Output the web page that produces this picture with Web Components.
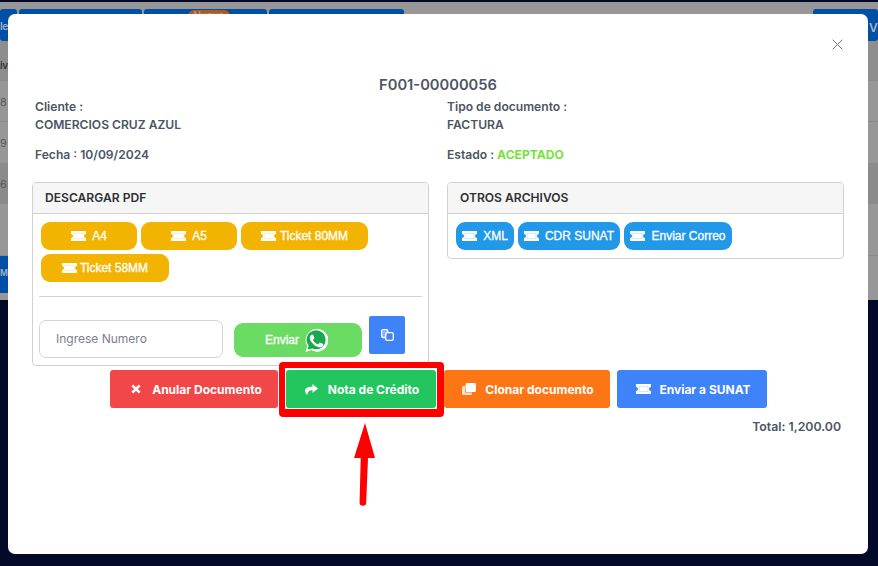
<!DOCTYPE html>
<html>
<head>
<meta charset="utf-8">
<style>
  html,body{margin:0;height:100%;overflow:hidden;background:#030929;}
</style>
</head>
<body>
<app-backdrop></app-backdrop>
<doc-modal></doc-modal>

<script>
const TICKET=`<svg viewBox="0 0 15 10" width="15" height="10" fill="currentColor"><path d="M0 0h15v3a2 2 0 0 0 0 4v3H0V7a2 2 0 0 0 0-4z"/><path d="M3 2.4h9v5.2H3z" fill="none" stroke="var(--ink)" stroke-opacity=".25" stroke-width=".9"/></svg>`;
const CLONE=`<svg viewBox="0 0 14 12" width="14" height="12" fill="currentColor"><path opacity=".8" d="M0 4.500A1.500 1.500 0 0 1 1.500 3H3v6.500H10v1A1.500 1.500 0 0 1 8.500 12h-7A1.500 1.500 0 0 1 0 10.500z"/><rect x="3.600" y="0" width="10.400" height="9" rx="1.600"/></svg>`;
const COPY=`<svg viewBox="0 0 13 12" width="13" height="12" fill="none" stroke="currentColor" stroke-width="1.300"><path fill="currentColor" fill-opacity=".35" d="M4.500 8.500H2A1.300 1.300 0 0 1 .7 7.200V2A1.300 1.300 0 0 1 2 .7h3.500A1.300 1.300 0 0 1 6.800 2v1.500"/><rect x="4.700" y="3.700" width="7.600" height="7.600" rx="1.300"/></svg>`;
const CLOSE=`<svg viewBox="0 0 11 11" width="11" height="11" fill="none" stroke="#6b7280" stroke-width="1"><path d="M.7.7l9.600 9.600M10.300.7L.7 10.300"/></svg>`;
const TIMES=`<svg viewBox="0 0 10 10" width="10" height="10" fill="none" stroke="currentColor" stroke-width="2.600"><path d="M1.300 1.300l7.400 7.400M8.700 1.300L1.300 8.700"/></svg>`;
const SHARE=`<svg viewBox="0 0 13 11" width="13" height="11" fill="currentColor"><path d="M7.500 0L13 4.500 7.500 9V6.300C4.500 6.300 2.700 7.200 2.300 11 .8 9.800 0 8.300 0 6.800 0 4 3 2.700 7.500 2.700z"/></svg>`;
const WHATSAPP=`<svg viewBox="0 0 24 24" width="23" height="23"><path fill="#fff" d="M.6 24l1.700-6.200A11.900 11.900 0 1 1 6.500 22z"/><path fill="#1aa84f" d="M2.700 21.400l1.100-4A9.900 9.900 0 1 1 7.500 20.300z"/><path fill="#fff" d="M8.700 6.600c-.3-.6-.5-.6-.8-.6h-.7c-.2 0-.6.1-1 .5s-1.200 1.200-1.200 2.900 1.300 3.400 1.400 3.600c.2.200 2.400 3.800 5.900 5.200 2.900 1.100 3.500.9 4.200.9.600-.1 2-.8 2.300-1.600.3-.8.300-1.500.2-1.600-.1-.1-.3-.2-.7-.4l-2.400-1.200c-.3-.1-.6-.2-.8.2l-1.100 1.400c-.2.200-.4.300-.8.100-.4-.2-1.500-.6-2.800-1.800-1-.9-1.700-2-1.900-2.400-.2-.4 0-.6.200-.8l.6-.7c.2-.2.200-.4.400-.6.100-.2.100-.5 0-.7z"/></svg>`;

class AppBackdrop extends HTMLElement{
  constructor(){
    super();
    this.attachShadow({mode:'open'}).innerHTML=`
<style>
  :host{display:block;position:absolute;inset:0;background:#030929;}
  .page{height:298px;margin-top:2px;background:#979797;position:relative;overflow:hidden;font:600 11px Inter,"Liberation Sans",sans-serif;}
  .tab{position:absolute;top:7px;height:32px;background:#004fa6;border-radius:3px;}
  .band{position:absolute;left:0;right:0;background:#8e8e8e;}
  .row{position:absolute;left:0;right:0;height:1px;background:#8a8a8a;}
  .side{position:absolute;left:0;top:254px;width:8px;height:37px;background:#004fa6;}
  .badge{position:absolute;left:188px;top:8px;width:42px;height:8px;background:#b1581e;border-radius:6px 6px 0 0;color:#999;font-size:10px;line-height:10px;text-align:center;}
  .t{position:absolute;left:0;white-space:nowrap;}
  .r{position:absolute;left:869px;white-space:nowrap;}
</style>
<div class="page">
  <div class="band" style="top:39px;height:39px"></div>
  <div class="band" style="top:161px;height:41px;background:#8b8b8b"></div>
  <div class="row" style="top:78px"></div>
  <div class="row" style="top:119px"></div>
  <div class="row" style="top:253px"></div>
  <div class="tab" style="left:0;width:17px"></div>
  <div class="tab" style="left:19px;width:123px"></div>
  <div class="tab" style="left:144px;width:123px"></div>
  <div class="tab" style="left:269px;width:135px"></div>
  <div class="tab" style="left:813px;width:65px"></div>
  <div class="badge">Nuevo</div>
  <div class="side"></div>
  <span class="t" style="top:18px;color:#a9b4c4;font-size:10px;letter-spacing:-.4px">le</span>
  <span class="t" style="top:57px;color:#333;font-size:10px;letter-spacing:-.4px">iv</span>
  <span class="t" style="top:93px;color:#5c5c5c;font-weight:400">8</span>
  <span class="t" style="top:134px;color:#5c5c5c;font-weight:400">9</span>
  <span class="t" style="top:175px;color:#5c5c5c;font-weight:400">6</span>
  <span class="t" style="top:266px;color:#a9b4c4;font-size:8.500px">M</span>
  <span class="r" style="top:18px;color:#a9b4c4;font-size:12px">V</span>
</div>`;
  }
}
customElements.define('app-backdrop',AppBackdrop);

class PillButton extends HTMLElement{
  constructor(){
    super();
    this.attachShadow({mode:'open'}).innerHTML=`
<style>
  :host{display:inline-flex;align-items:center;justify-content:center;height:28px;border-radius:9px;color:#fff;
    font:400 12px "Liberation Sans",Arial,sans-serif;-webkit-text-stroke:.3px #fff;gap:6px;box-sizing:border-box;--ink:#000;white-space:nowrap;}
  span{display:inline-flex}
</style>
<span>${TICKET}</span><slot></slot>`;
  }
  connectedCallback(){
    this.style.background=this.getAttribute('color');
    this.style.width=this.getAttribute('w')+'px';
    this.style.setProperty('--ink',this.getAttribute('color'));
    if(this.hasAttribute('gap'))this.style.gap=this.getAttribute('gap')+'px';
  }
}
customElements.define('pill-button',PillButton);

class ActionButton extends HTMLElement{
  constructor(){
    super();
    this.attachShadow({mode:'open'}).innerHTML=`
<style>
  :host{display:inline-flex;align-items:center;justify-content:center;gap:10px;height:38px;border-radius:3px;color:#fff;
    font:700 12px Inter,"Liberation Sans",sans-serif;box-sizing:border-box;white-space:nowrap;}
  span{display:inline-flex}
</style>
<span><slot name="icon"></slot></span><slot></slot>`;
  }
  connectedCallback(){
    this.style.background=this.getAttribute('color');
    this.style.width=this.getAttribute('w')+'px';
    this.style.setProperty('--ink',this.getAttribute('color'));
    this.style.gap=(this.getAttribute('gap')||10)+'px';
    this.style.paddingLeft=(this.getAttribute('pl')||0)+'px';
  }
}
customElements.define('action-button',ActionButton);

class PanelCard extends HTMLElement{
  constructor(){
    super();
    this.attachShadow({mode:'open'}).innerHTML=`
<style>
  :host{display:block;border:1px solid #d1d1d1;border-radius:4px;box-sizing:border-box;overflow:hidden;background:#fff;}
  header{height:30px;background:#f6f6f6;border-bottom:1px solid #d1d1d1;padding:0 0 1px 12px;box-sizing:content-box;height:29px;display:flex;align-items:center;
    font:600 12.100px Inter,"Liberation Sans",sans-serif;color:#2e3034;}
</style>
<header>${this.getAttribute('title')}</header>
<slot></slot>`;
  }
}
customElements.define('panel-card',PanelCard);

class DocModal extends HTMLElement{
  constructor(){
    super();
    this.attachShadow({mode:'open'}).innerHTML=`
<style>
  :host{display:block;position:absolute;left:8px;top:14px;width:860px;height:540px;background:#fff;border-radius:7px;
    font:600 12.100px Inter,"Liberation Sans",sans-serif;color:#4b5563;box-sizing:border-box;}
  .close{position:absolute;right:25px;top:25px;line-height:0;}
  h2{margin:0;padding-top:62px;height:84px;box-sizing:border-box;text-align:center;font:600 14.700px/18px Inter,"Liberation Sans",sans-serif;color:#4b5563;}
  .info{display:grid;grid-template-columns:412px 1fr;padding-left:27px;}
  .info p{margin:0;line-height:18px;}
  .info .date{margin-top:12px;}
  .ok{color:#76e23a;font-weight:700;}
  .cards{display:grid;grid-template-columns:397px 397px;column-gap:18px;padding-left:24px;margin-top:18px;align-items:start;}
  .btns{display:flex;flex-wrap:wrap;gap:4px;padding:8px 8px 8px;}
  .btns.two{padding-bottom:14px;}
  hr{border:0;border-top:1px solid #d1d1d1;margin:0 6px;}
  .send{display:flex;align-items:flex-start;padding:19px 6px 0;height:68px;box-sizing:border-box;}
  .input{width:184px;height:38px;margin-top:4px;border:1px solid #d1d5db;border-radius:7px;box-sizing:border-box;padding:0 0 2px 16px;
    display:flex;align-items:center;font:400 12px Inter,"Liberation Sans",sans-serif;color:#7a808c;background:#fff;}
  .wa{width:128px;height:34px;margin:7px 0 0 11px;padding-right:3px;border-radius:9px;background:#6bdc63;color:#fff;display:flex;align-items:center;justify-content:center;gap:6px;box-sizing:border-box;
    font:400 12px "Liberation Sans",Arial,sans-serif;-webkit-text-stroke:.3px #fff;}
  .wa span,.copy span{display:flex}
  .copy{width:36px;height:38px;margin-left:7px;border-radius:2px;background:#3f83f8;color:#fff;display:flex;align-items:center;justify-content:center;}
  .actions{display:flex;margin-top:4px;padding-left:102px;position:relative;}
  .total{text-align:right;padding-right:27px;margin-top:10px;font:600 12.300px/18px Inter,"Liberation Sans",sans-serif;}
  .mark{position:absolute;left:271px;top:-8px;width:165px;height:55px;border-style:solid;border-color:#fe0000;border-width:6px 7px 8px 6px;border-radius:4px;box-sizing:border-box;}
  .arrow{position:absolute;left:346px;top:53px;}
  .i{display:inline-flex;}
</style>
<div class="close">${CLOSE}</div>
<h2>F001-00000056</h2>
<section class="info">
  <div>
    <p>Cliente :</p>
    <p>COMERCIOS CRUZ AZUL</p>
    <p class="date">Fecha : 10/09/2024</p>
  </div>
  <div>
    <p>Tipo de documento :</p>
    <p>FACTURA</p>
    <p class="date">Estado : <span class="ok">ACEPTADO</span></p>
  </div>
</section>
<section class="cards">
  <panel-card title="DESCARGAR PDF">
    <div class="btns two">
      <pill-button color="#f2b400" w="96" gap="6">A4</pill-button>
      <pill-button color="#f2b400" w="96" gap="6">A5</pill-button>
      <pill-button color="#f2b400" w="127" gap="4">Ticket 80MM</pill-button>
      <pill-button color="#f2b400" w="128" gap="3">Ticket 58MM</pill-button>
    </div>
    <hr>
    <div class="send">
      <div class="input">Ingrese Numero</div>
      <div class="wa">Enviar <span>${WHATSAPP}</span></div>
      <div class="copy"><span>${COPY}</span></div>
    </div>
  </panel-card>
  <panel-card title="OTROS ARCHIVOS">
    <div class="btns">
      <pill-button color="#2299e8" w="58" gap="6">XML</pill-button>
      <pill-button color="#2299e8" w="102" gap="6">CDR SUNAT</pill-button>
      <pill-button color="#2299e8" w="108" gap="6">Enviar Correo</pill-button>
    </div>
  </panel-card>
</section>
<section class="actions">
  <action-button color="#f24748" w="168" gap="11" pl="5"><span slot="icon" class="i">${TIMES}</span>Anular Documento</action-button>
  <action-button color="#22c55e" w="150" gap="10" pl="2" style="margin-left:8px"><span slot="icon" class="i">${SHARE}</span>Nota de Crédito</action-button>
  <action-button color="#fd7615" w="166" gap="9" pl="2" style="margin-left:8px"><span slot="icon" class="i">${CLONE}</span>Clonar documento</action-button>
  <action-button color="#3f83f8" w="150" gap="8" pl="3" style="margin-left:7px"><span slot="icon" class="i">${TICKET}</span>Enviar a SUNAT</action-button>
  <div class="mark"></div>
  <svg class="arrow" width="22" height="84" viewBox="0 0 22 84"><path d="M11 0L21 35H14L12.200 79.500a3.300 3.300 0 0 1-6.600 0L6.700 35H0z" fill="#fe0000"/></svg>
</section>
<div class="total">Total: 1,200.00</div>`;
  }
}
customElements.define('doc-modal',DocModal);
</script>
</body>
</html>
